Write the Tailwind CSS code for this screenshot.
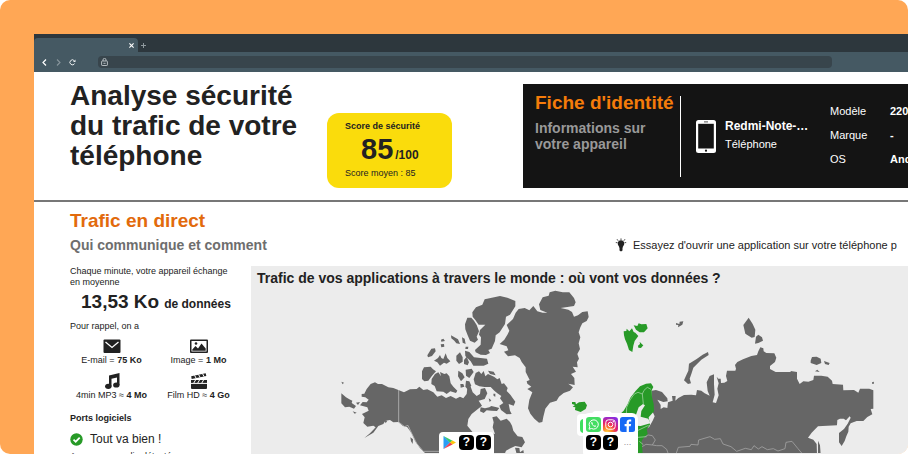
<!DOCTYPE html>
<html lang="fr">
<head>
<meta charset="utf-8">
<meta name="viewport" content="width=device-width, initial-scale=1">
<title>Analyse sécurité du trafic</title>
<script src="https://cdn.jsdelivr.net/npm/@tailwindcss/browser@4"></script>
</head>
<body class="bg-white font-['Liberation_Sans',Arial,sans-serif] text-[#222]">
<div class="flex h-screen overflow-hidden rounded-[10px] bg-[#ffa755] pt-[34px] pl-[34px]">
<div class="min-w-0 flex-1 overflow-hidden bg-white">

  <div class="bg-[#2d373d]">
    <div class="flex h-[18px] items-end">
      <div class="flex h-[14px] w-[104px] items-center justify-end rounded-t bg-[#455963] pr-1">
        <button aria-label="Fermer l'onglet"><svg class="h-[5px] w-[5px]" viewBox="0 0 5 5" stroke="#fff" stroke-width="1.1"><path d="M.4 .4L4.6 4.6M4.6 .4L.4 4.6"/></svg></button>
      </div>
      <button class="mb-1 ml-[3px]" aria-label="Nouvel onglet"><svg class="h-[5px] w-[5px]" viewBox="0 0 5 5" stroke="#8f999e"><path d="M2.500 0V5M0 2.500H5"/></svg></button>
    </div>
    <div class="flex h-5 items-center bg-[#455963] pl-2">
      <button aria-label="Précédent"><svg class="h-[7px] w-[5px]" viewBox="0 0 5 7" fill="none" stroke="#fff" stroke-width="1.2"><path d="M4 .5L1 3.5L4 6.5"/></svg></button>
      <button class="ml-[9px]" aria-label="Suivant"><svg class="h-[7px] w-[5px]" viewBox="0 0 5 7" fill="none" stroke="#87949b" stroke-width="1.1"><path d="M1 .5L4 3.5L1 6.5"/></svg></button>
      <button class="ml-2" aria-label="Actualiser"><svg class="h-[7px] w-[7px]" viewBox="0 0 7 7" fill="none" stroke="#e8ecee" stroke-width="1"><path d="M5.6 4.6A2.5 2.5 0 1 1 5.3 1.7"/><path d="M6.5 .5V3H4z" fill="#e8ecee" stroke="none"/></svg></button>
      <div class="mr-[76px] ml-[22px] flex h-3 flex-1 items-center rounded-sm bg-[#38454c] pl-[3px]">
        <svg class="h-2 w-[7px]" viewBox="0 0 7 8" fill="none" stroke="#c3cacd" stroke-width=".9"><rect x=".6" y="3" width="5.8" height="4.5" rx=".6"/><path d="M2 3V1.9a1.5 1.5 0 0 1 3 0V3M2.4 5.3H4.6"/></svg>
        <input class="h-3 min-w-0 flex-1 bg-transparent px-1 text-[8px] text-white outline-none" aria-label="Adresse">
      </div>
    </div>
  </div>

  <header class="flex h-[130px] border-b-2 border-[#777] pt-3 pl-9">
    <h1 class="-mt-[3px] w-[257px] shrink-0 text-[28px] leading-[30px] font-bold whitespace-nowrap">Analyse sécurité<br>du trafic de votre<br>téléphone</h1>
    <section class="mt-[29px] h-[75px] w-[125px] shrink-0 rounded-xl bg-[#fadc0c] px-[18px] pt-[7px]">
      <h2 class="text-[9px] leading-3 font-bold whitespace-nowrap">Score de sécurité</h2>
      <p class="flex h-[35px] items-baseline pl-4 leading-[35px] font-bold whitespace-nowrap"><span class="text-[29px]">85</span><span class="pl-[2px] text-[12px]">/100</span></p>
      <p class="text-[9px] leading-3 whitespace-nowrap">Score moyen : 85</p>
    </section>
    <section class="ml-[71px] flex h-[104px] flex-1 overflow-hidden bg-[#141414] pt-3 pl-3 text-white">
      <div class="w-[145px] shrink-0 whitespace-nowrap">
        <h2 class="-mt-1 text-[19px] leading-[22px] font-bold text-[#f57c0a]">Fiche d'identité</h2>
        <p class="mt-[6px] text-[14px] leading-4 font-bold text-[#999]">Informations sur<br>votre appareil</p>
      </div>
      <div class="h-[81px] w-px shrink-0 bg-white"></div>
      <svg class="mt-6 ml-[15px] h-[33px] w-5 shrink-0" viewBox="0 0 20 33"><rect width="20" height="33" rx="2.5" fill="#fff"/><path d="M2.2 3.8H17.8V28.5H2.2z" fill="#141414"/><path d="M8 1.9H12" stroke="#555"/><circle cx="10" cy="30.7" r="1.1" fill="#141414"/></svg>
      <div class="mt-[21px] ml-[9px] w-[105px] shrink-0 text-[12px] leading-[18px] whitespace-nowrap">
        <p class="font-bold">Redmi-Note-…</p>
        <p class="text-[11px]">Téléphone</p>
      </div>
      <dl class="mt-[3px] grid shrink-0 grid-cols-[60px_auto] content-start text-[11px] leading-6 whitespace-nowrap">
        <dt>Modèle</dt><dd class="font-bold">220</dd>
        <dt>Marque</dt><dd class="font-bold">-</dd>
        <dt>OS</dt><dd class="font-bold">Android</dd>
      </dl>
    </section>
  </header>

  <main class="pl-9">
    <h2 class="pt-[7px] text-[19px] leading-6 font-bold text-[#e26a0c]">Trafic en direct</h2>
    <div class="mt-px mb-[10px] flex h-[22px] items-center whitespace-nowrap">
      <h3 class="w-[545px] shrink-0 text-[14px] leading-[22px] font-bold text-[#6e6e6e]">Qui communique et comment</h3>
      <svg class="h-[14px] w-3 shrink-0" viewBox="0 0 12 14" fill="#222"><path d="M6 2.300c2 0 3.300 1.400 3.300 3.100 0 1.800-1.600 2.400-1.700 4.700H4.400C4.300 7.800 2.700 7.200 2.700 5.400c0-1.700 1.300-3.100 3.300-3.100zM4.500 9.900h3v2.600L6 13.600l-1.500-1.100z"/><path d="M6 .400V2M2 1.200L3.200 2.800M10 1.200L8.800 2.800M.8 4.600H2.400M11.200 4.600H9.600" stroke="#222" stroke-width=".8"/></svg>
      <p class="ml-[6px] text-[11px] leading-4">Essayez d'ouvrir une application sur votre téléphone p</p>
    </div>

    <div class="flex">
      <aside class="w-[181px] shrink-0 text-[9px] leading-[11px] whitespace-nowrap">
        <p>Chaque minute, votre appareil échange<br>en moyenne</p>
        <p class="pl-[11px] leading-[28px] font-bold"><span class="text-[19px]">13,53 Ko</span><span class="pl-[5px] text-[12px]">de données</span></p>
        <p class="mt-[2px]">Pour rappel, on a</p>
        <ul class="mt-[6px] grid grid-cols-[83px_91px] gap-y-[6px] text-center leading-[13px]">
          <li class="flex flex-col items-center">
            <svg class="h-4 w-[18px]" viewBox="0 0 18 16"><rect x=".5" y="1.500" width="17" height="13.500" rx="1" fill="#222"/><path d="M2.500 4L9 9.500L15.500 4" fill="none" stroke="#fff" stroke-width="1.300"/></svg>
            <span>E-mail = <b>75 Ko</b></span></li>
          <li class="flex flex-col items-center">
            <svg class="h-4 w-[18px]" viewBox="0 0 18 16" fill="#222"><path fill-rule="evenodd" d="M1 1.500H17a1 1 0 0 1 1 1V14a1 1 0 0 1-1 1H1a1 1 0 0 1-1-1V2.500a1 1 0 0 1 1-1zM1.500 3V13.500H16.500V3z"/><path d="M2.300 12.800V11.500L5.500 8L8 10.500L11.500 5.500L15.700 10.500V12.800z"/><circle cx="6" cy="5.500" r="1.300"/></svg>
            <span>Image = <b>1 Mo</b></span></li>
          <li class="flex flex-col items-center">
            <svg class="h-4 w-[18px]" viewBox="0 0 18 16" fill="#222"><path d="M6 2.500L16.500 0V12.300H14V4.500L8.500 5.800V13.500H6z"/><ellipse cx="5.300" cy="13.300" rx="3.200" ry="2.600"/><ellipse cx="13.300" cy="12" rx="3.200" ry="2.600"/></svg>
            <span>4min MP3 ≈ <b>4 Mo</b></span></li>
          <li class="flex flex-col items-center">
            <svg class="h-4 w-[18px]" viewBox="0 0 18 16" fill="#222"><path d="M1 7H17V15a1 1 0 0 1-1 1H2a1 1 0 0 1-1-1z"/><path d="M1.200 3.200L15.700.3L16.300 2.900L1.700 6z"/><path d="M4.500 2.300L6.200 5.300M8.500 1.500L10.200 4.500M12.500.7L14.200 3.700M5.500 7L3.800 10M9.500 7L7.800 10M13.500 7L11.800 10M1 10.400H17" stroke="#fff" stroke-width="1"/></svg>
            <span>Film HD ≈ <b>4 Go</b></span></li>
        </ul>
        <h4 class="mt-[9px] leading-[14px] font-bold">Ports logiciels</h4>
        <p class="mt-[6px] flex items-center gap-[7px] text-[12px] leading-4"><svg class="h-[13px] w-[13px]" viewBox="0 0 13 13"><circle cx="6.500" cy="6.500" r="6.200" fill="#279a27"/><path d="M3.500 6.600L5.700 8.700L9.700 4.600" fill="none" stroke="#fff" stroke-width="1.700"/></svg>Tout va bien !</p>
        <p class="mt-[3px] leading-[13px]">Aucune anomalie détectée</p>
      </aside>

      <section class="relative min-w-0 flex-1 overflow-hidden bg-[#ececec]">
        <h3 class="mb-px pt-[2px] pl-[6px] text-[14px] leading-5 font-bold whitespace-nowrap">Trafic de vos applications à travers le monde : où vont vos données ?</h3>
        <svg class="h-[164px] w-[657px] max-w-none" viewBox="251 290 657 164" role="img" aria-label="Carte du monde">
          <g fill="#666">
            <g transform="translate(330 285) scale(.33333)">
              <!-- Alaska et Canada -->
              <path d="M95 330L103 329L110 315L122 300L135 295L144 300L156 300L175 310L190 312L205 318L222 325L240 316L260 315L268 308L280 318L292 316L310 325L322 338L335 334L348 342L362 336L378 344L390 338L400 343L410 330L412 312L422 308L428 325L440 336L450 330L452 315L465 312L472 328L464 345L446 350L456 365L440 378L425 390L415 405L412 425L420 435L428 445L500 450V510H288L270 492L255 470L245 448L232 430L218 425L205 414L190 415L180 408L166 410L160 420L145 426L130 446L103 462L120 448L137 430L130 425L112 428L100 417L104 400L96 390L116 380L112 370L90 364L98 354L110 355L116 347L106 340L95 338z"/>
              <path d="M34 328L48 340L58 346L67 350L65 357L78 366L72 374L58 368L45 370L34 358zM34 293L42 296L38 301zM78 356L90 354L84 363zM68 382L80 386L74 389zM163 408L172 410L167 418zM241 460L249 466L248 480L243 472z"/>
              <path d="M276 262L282 250L302 248L309 256L318 262L306 275L295 290L283 292L276 285zM305 285L315 270L325 265L333 277L330 264L343 270L350 268L358 277L362 298L370 308L382 320L378 327L361 322L350 330L340 323L320 322L314 306L304 300z"/>
              <path d="M292 214L304 194L315 193L317 202L306 216L294 220zM332 181L342 180L343 188L334 190zM333 167L340 164L345 171L334 173zM312 230L324 222L330 213L334 222L340 225L347 208L352 222L361 232L350 239L342 236L330 245L322 235zM363 154L384 166L390 180L379 178L373 170L364 163zM396 160L404 164L407 180L398 176zM379 215L390 205L398 220L398 233L387 240L379 230zM385 260L397 268L404 280L393 292L384 277zM402 228L410 218L417 235L413 244L402 240zM391 300L400 300L403 308L392 311zM407 257L425 254L431 264L418 282L408 275zM408 290L418 292L424 305L414 317L406 308zM405 200L418 204L432 220L471 224L475 239L461 245L430 245L422 232L406 216zM407 188L415 188L414 195L406 195z"/>
              <path d="M427 85L438 70L457 62L464 46L482 42L510 36L532 41L556 51L556 67L540 92L528 98L525 120L509 145L497 154L495 171L485 194L475 198L480 207L468 213L452 212L437 205L435 198L452 182L453 160L447 152L450 138L466 122L446 122L436 108L428 98z"/>
              <path d="M412 101L424 101L432 110L440 123L447 142L440 158L444 167L434 176L420 170L413 154L406 136L405 121z"/>
              <path d="M437 267L447 262L454 270L461 261L466 277L474 270L492 278L502 286L509 282L515 300L522 298L533 312L530 321L541 332L556 353L551 365L536 360L540 380L545 390L530 391L513 378L508 365L520 357L510 343L514 336L502 328L493 320L482 309L464 309L448 307L435 301L431 286zM474 260L491 263L497 274L480 270zM490 329L496 329L496 338L491 336zM452 370L465 373L478 370L484 366L500 370L508 372L501 381L484 380L470 379L461 387L450 382zM476 343L484 349L479 354z"/>
              <path d="M487 400L500 397L512 410L530 404L540 414L546 425L550 440L563 457L577 459L585 475L575 490L556 486L543 492L528 500L524 510H487L491 470L495 450L488 430L491 415zM555 491L568 492L570 505L580 498L582 510H560z"/>
              <path d="M206 318V414L224 428L234 424L245 448L260 478L280 502H327" fill="none" stroke="#b5b5b5" stroke-width="2.500"/>
            </g>
            <g transform="translate(480 285) scale(.33333)">
              <!-- Groenland -->
              <path d="M59 180L73 167L83 151L88 140L80 123L99 105L107 86L116 75L134 72L148 79L160 66L172 82L188 86L202 86L181 78L177 61L188 40L206 35L209 25L226 20L248 25L268 25L282 42L287 55L282 66L242 72L265 77L276 84L282 98L294 94L307 84L323 82L326 99L320 111L307 118L301 130L296 145L301 160L296 178L300 195L292 210L297 224L291 235L293 250L278 248L288 263L273 270L283 282L284 303L265 299L279 310L270 320L251 327L237 338L230 350L210 356L196 374L190 398L187 414L177 416L163 404L151 389L144 373L148 347L157 325L142 315L154 308L142 299L140 292L149 288L137 264L137 250L125 234L119 222L105 214L84 217L72 203L85 199L80 187z"/>
            </g>
            <g transform="translate(640 285) scale(.33333)">
              <!-- Russie -->
              <path d="M35 320L48 318L66 324L82 343L83 352L70 354L52 347L62 363L62 375L71 370L82 372L84 355L98 350L96 336L107 336L106 350L115 342L132 333L154 332L168 334L171 318L184 320L194 328L209 335L203 321L200 295L209 276L222 271L222 300L224 332L218 355L228 357L236 334L232 314L236 298L230 278L235 284L242 284L243 297L253 296L262 291L258 276L261 260H286L288 254L285 243L292 234L309 226L334 216L351 213L355 202L361 190L370 193L371 202L379 207L403 208L409 221L405 234L390 246L390 255L407 264H452V261L471 264V284L479 300L490 292L505 293L520 288L522 275L544 275L563 278L576 290L578 300L609 302L610 319L642 318L655 326L660 314H688L700 319V374L692 375L697 391L682 399L670 411L650 411L632 418L626 428L625 443L619 457L614 471L605 486L597 475L597 447L612 435L623 419L632 401L629 397L618 409L611 404L600 404L592 408L591 424L562 425L534 427L515 446L504 461L520 467L530 480L531 510H0V435L27 430L38 410L44 397L35 377z"/>
              <path d="M132 289L138 275L145 260L147 239L170 225L188 212L204 204L206 213L184 227L160 251L154 270L149 284L153 298L144 300zM310 123L326 101L338 120L346 137L344 159L335 161L316 149zM345 179L348 158L355 152L366 160L369 170L355 177zM108 117L118 120L119 113L130 112L127 122L114 130L115 123L108 122zM512 230L516 219L530 218L542 224L544 237L530 243L512 237zM552 231L569 237L566 243L555 240zM525 262L532 257L539 264zM696 295L702 293L701 300L697 300zM534 470L540 484L542 510H534z"/>
              <path d="M8 460L25 453L37 455L46 468L37 483L50 485L66 485L80 496L85 510M108 510L115 490L150 487L153 481L174 483L176 468L210 458L224 466L241 464L249 480L273 488L290 502L316 493L334 497L342 485L355 495L366 488L382 497L400 494L414 501L435 494L438 475L456 472L474 494L485 507M37 483L18 481L3 490" fill="none" stroke="#aaa" stroke-width="2.200"/>
            </g>
          </g>
          <g transform="translate(480 285) scale(.33333)" fill="#279a27">
            <!-- Svalbard, Islande, Scandinavie -->
            <path d="M431 142L439 141L440 134L448 142L456 133L461 144L466 146L475 156L464 171L460 185L457 204L447 198L441 179L435 166L432 154zM461 124L472 126L476 118L484 121L499 120L503 133L492 145L479 145L468 137zM474 185L480 180L479 173L486 181L490 184L483 192L475 191zM276 354L286 354L288 361L297 355L314 353L321 364L317 375L302 384L285 378L286 370L278 368L285 363L276 360z"/>
            <path d="M418 392L431 380L443 360L451 341L466 322L480 307L498 299L513 298L520 309L515 319L516 340L521 360L522 382L506 400L510 422L500 435L503 450L494 458L485 470L488 510H360V500L410 480V400z"/>
            <path d="M468 392L476 370L489 360L495 364L484 381L482 398L505 404L511 418L482 426L468 425z" fill="#ececec"/>
            <path d="M439 392L440 370L450 348L463 330L474 325L487 330L492 319L502 310L513 316M487 330L490 360M472 440L506 424M474 460L500 458M478 472L490 482" fill="none" stroke="#a9d6a9" stroke-width="2.200"/>
          </g>
        </svg>

        <div class="absolute top-[166px] left-[188px] flex gap-[2px] rounded bg-white p-[3px] pb-2">
          <svg class="h-[15px] w-[15px]" viewBox="0 0 15 15"><path d="M1.500 1V14L8 7.500z" fill="#2a9df4"/><path d="M1.500 1L10.500 5.700L8 7.700z" fill="#35c76a"/><path d="M10.300 5.500L14 7.500L10.300 9.600L8 7.500z" fill="#fdc60b"/><path d="M1.500 14L8 7.400L10.500 9.500z" fill="#ec4055"/></svg>
          <span class="h-[15px] w-[15px] rounded bg-black text-center text-[12px] leading-[15px] font-bold text-white">?</span>
          <span class="h-[15px] w-[15px] rounded bg-black text-center text-[12px] leading-[15px] font-bold text-white">?</span>
        </div>
        <div class="absolute top-[148px] left-[326px] h-[22px] w-4 rounded bg-white pt-[5px] pl-[3px]"><div class="h-[14px] w-3 rounded-l bg-[#3fe05f]"></div></div>
        <div class="absolute top-[145px] left-[341px] h-3 w-5 rounded bg-white"></div>
        <div class="absolute top-[147px] left-[332px] grid grid-cols-[15px_15px_15px] gap-x-[2px] gap-y-[3px] rounded-md bg-white px-[3px] pt-1 pb-2">
          <svg class="h-[15px] w-[15px]" viewBox="0 0 15 15"><rect width="15" height="15" rx="3.200" fill="#43dd62"/><path d="M3 12.200L3.700 9.700A4.600 4.600 0 1 1 5.500 11.500z" fill="none" stroke="#fff" stroke-width="1"/><path d="M5.700 4.800c-.9.900-.3 2.500 1 3.700s2.900 1.800 3.600.6L9 8.200l-.7.600C7.500 8.500 6.700 7.700 6.400 7L7 6.300z" fill="#fff"/></svg>
          <svg class="h-[15px] w-[15px]" viewBox="0 0 15 15"><defs><radialGradient id="ig" cx=".28" cy="1" r="1.050"><stop stop-color="#ffd547"/><stop offset=".3" stop-color="#fb7a2a"/><stop offset=".6" stop-color="#e5206b"/><stop offset="1" stop-color="#8a2be0"/></radialGradient></defs><rect width="15" height="15" rx="3.200" fill="url(#ig)"/><g fill="none" stroke="#fff"><rect x="2.800" y="2.800" width="9.400" height="9.400" rx="2.700"/><circle cx="7.500" cy="7.500" r="2.300"/></g><circle cx="10.300" cy="4.700" r=".7" fill="#fff"/></svg>
          <svg class="h-[15px] w-[15px]" viewBox="0 0 15 15"><rect width="15" height="15" rx="2.500" fill="#1769f5"/><path d="M6.600 15V9.300H4.600V7H6.600V5.500C6.600 3.500 7.800 2.500 9.500 2.500L11.200 2.600V4.600H10C9.200 4.600 8.900 5 8.900 5.700V7H11.100L10.700 9.300H8.900V15z" fill="#fff"/></svg>
          <span class="h-[15px] w-[15px] rounded bg-black text-center text-[12px] leading-[15px] font-bold text-white">?</span>
          <span class="h-[15px] w-[15px] rounded bg-black text-center text-[12px] leading-[15px] font-bold text-white">?</span>
          <span class="text-center text-[8px] leading-[15px] text-[#555]">…</span>
        </div>
      </section>
    </div>
  </main>
</div>
</div>
</body>
</html>
